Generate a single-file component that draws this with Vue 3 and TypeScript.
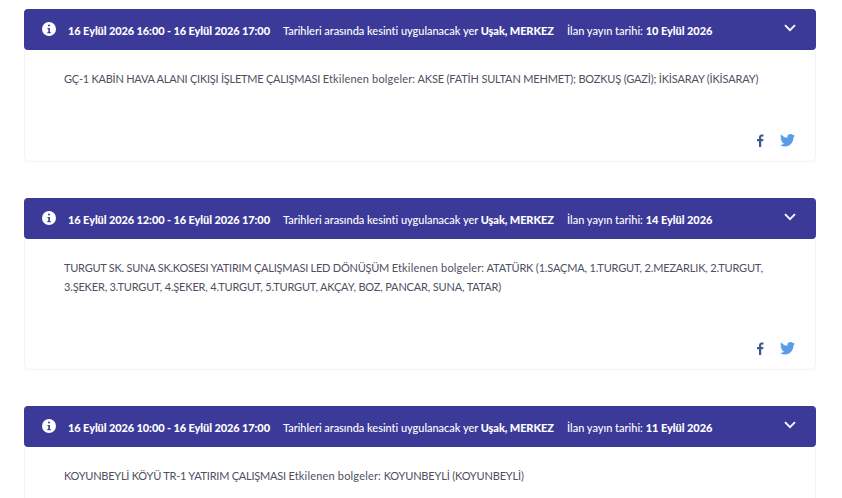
<template>
  <div class="page">
    <section v-for="item in items" :key="item.start" class="card">
      <header class="card-head">
        <svg class="info" viewBox="0 0 14 14" width="14" height="14">
          <circle cx="7" cy="7" r="7" fill="#fff" />
          <rect x="6" y="2.600" width="2" height="2" rx="1" fill="#3c3a98" />
          <path d="M5.400 5.900h2.500v4.100h.8v1.200H5.400V10h.9V7.100h-.9z" fill="#3c3a98" />
        </svg>
        <span class="date"><b>{{ item.start }} - {{ item.end }}</b></span>
        <span class="place">Tarihleri arasında kesinti uygulanacak yer <b>Uşak, MERKEZ</b></span>
        <span class="pub">İlan yayın tarihi: <b>{{ item.published }}</b></span>
        <svg class="chevron" viewBox="0 0 12 8" width="12" height="8">
          <path d="M1 1.200l5 5 5-5" fill="none" stroke="#fff" stroke-width="1.800" />
        </svg>
      </header>
      <div class="card-body">
        <p class="text"><span class="title">{{ item.title }}</span> <span class="label">Etkilenen bolgeler:</span> {{ item.areas }}</p>
        <div class="share">
          <svg viewBox="0 0 8 13" width="8" height="13">
            <path d="M5.200 13V7.200h1.900l.3-2.200H5.200V3.600c0-.7.2-1.100 1.100-1.100h1.200V.5C7.300.5 6.600.4 5.800.4 4.100.4 3 1.400 3 3.300V5H1v2.200h2V13z" fill="#3b5a8c" />
          </svg>
          <svg viewBox="0 0 24 20" width="15" height="12.500">
            <path d="M24 2.400c-.9.400-1.800.7-2.800.8 1-.6 1.800-1.600 2.200-2.700-1 .6-2 1-3.100 1.200C19.300.7 18 0 16.600 0c-2.700 0-4.900 2.200-4.900 4.900 0 .4 0 .8.100 1.100C7.700 5.800 4.100 3.900 1.700.9 1.200 1.600 1 2.500 1 3.400c0 1.700.9 3.200 2.200 4.100-.8 0-1.600-.2-2.200-.6v.1c0 2.400 1.700 4.400 3.900 4.800-.4.100-.8.200-1.300.2-.3 0-.6 0-.9-.1.600 2 2.400 3.400 4.600 3.400-1.700 1.300-3.800 2.100-6.100 2.100-.4 0-.8 0-1.200-.1C2.200 19.300 4.800 20 7.500 20c9.100 0 14-7.500 14-14v-.6c1-.7 1.800-1.600 2.500-3z" fill="#5a9be6" />
          </svg>
        </div>
      </div>
    </section>
  </div>
</template>

<script setup lang="ts">
const items = [
  {
    start: "16 Eylül 2026 16:00",
    end: "16 Eylül 2026 17:00",
    published: "10 Eylül 2026",
    title: "GÇ-1 KABİN HAVA ALANI ÇIKIŞI İŞLETME ÇALIŞMASI",
    areas: "AKSE (FATİH SULTAN MEHMET); BOZKUŞ (GAZİ); İKİSARAY (İKİSARAY)",
  },
  {
    start: "16 Eylül 2026 12:00",
    end: "16 Eylül 2026 17:00",
    published: "14 Eylül 2026",
    title: "TURGUT SK. SUNA SK.KOSESI YATIRIM ÇALIŞMASI LED DÖNÜŞÜM",
    areas: "ATATÜRK (1.SAÇMA, 1.TURGUT, 2.MEZARLIK, 2.TURGUT, 3.ŞEKER, 3.TURGUT, 4.ŞEKER, 4.TURGUT, 5.TURGUT, AKÇAY, BOZ, PANCAR, SUNA, TATAR)",
  },
  {
    start: "16 Eylül 2026 10:00",
    end: "16 Eylül 2026 17:00",
    published: "11 Eylül 2026",
    title: "KOYUNBEYLİ KÖYÜ TR-1 YATIRIM ÇALIŞMASI",
    areas: "KOYUNBEYLİ (KOYUNBEYLİ)",
  },
];
</script>

<style>
html,
body {
  background: #fff;
  overflow: hidden;
}
</style>

<style scoped>
.page {
  height: 498px;
  overflow: hidden;
  padding: 9px 26px 0 24px;
  box-sizing: border-box;
  display: flex;
  flex-direction: column;
  gap: 36px;
  font-family: Lato, "Liberation Sans", sans-serif;
}

.card {
  flex: none;
  display: flex;
  flex-direction: column;
  border-radius: 4px;
}

.card-head {
  flex: none;
  height: 41px;
  display: flex;
  align-items: center;
  padding: 0 20px 0 18px;
  box-sizing: border-box;
  background: #3c3a98;
  border-radius: 4px;
  color: #fff;
  font-size: 11px;
  font-weight: 500;
  white-space: nowrap;
}

.card-head span {
  margin-top: 2px;
}

.card-head b {
  font-weight: 900;
  letter-spacing: -0.1px;
}

.info {
  margin-top: -1px;
}

.date {
  margin-left: 12px;
  width: 215px;
}

.place {
  width: 284px;
  letter-spacing: -0.03px;
}

.pub b {
  letter-spacing: -0.05px;
}

.chevron {
  margin-left: auto;
  margin-top: -3px;
}

.card-body {
  border: 1px solid #f3f3f5;
  border-top: 0;
  border-radius: 0 0 6px 6px;
  padding: 19px 20px 14px 39px;
}

.text {
  margin: 0 19px 0 0;
  font-size: 11px;
  line-height: 19px;
  letter-spacing: -0.17px;
  color: #4f4f5f;
}

.title {
  letter-spacing: -0.24px;
}

.label {
  letter-spacing: 0.18px;
}

.share {
  margin-top: 46px;
  height: 13px;
  display: flex;
  justify-content: flex-end;
  align-items: center;
  gap: 16px;
}
</style>
